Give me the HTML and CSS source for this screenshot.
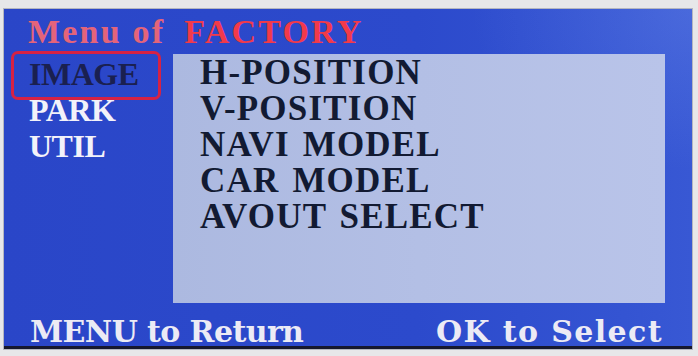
FILE: index.html
```html
<!DOCTYPE html>
<html lang="en">
<head>
<meta charset="utf-8">
<title>Menu of FACTORY</title>
<link rel="stylesheet" href="styles.css">
</head>
<body>
<div class="frame">
  <div class="screen">
    <div class="title"><span class="title-a">Menu of</span><span class="title-b">FACTORY</span></div>
    <div class="middle">
      <ul class="side">
        <li class="side-item selected">IMAGE</li>
        <li class="side-item">PARK</li>
        <li class="side-item">UTIL</li>
      </ul>
      <ul class="panel">
        <li>H-POSITION</li>
        <li>V-POSITION</li>
        <li>NAVI MODEL</li>
        <li>CAR MODEL</li>
        <li>AVOUT SELECT</li>
      </ul>
    </div>
    <div class="footer">
      <span class="foot-left">MENU to Return</span>
      <span class="foot-right">OK to Select</span>
    </div>
  </div>
</div>
</body>
</html>
```
FILE: styles.css
```css
html, body {
  margin: 0;
  padding: 0;
}
body {
  background: #e7e7e9;
  width: 698px;
  height: 356px;
  overflow: hidden;
}
.frame {
  padding: 9px 6px 0 4px;
}
.screen {
  width: 688px;
  height: 340px;
  box-sizing: border-box;
  border-bottom: 3px solid #16182e;
  box-shadow: 0 0 0 1px #b4b6c0;
  background:
    radial-gradient(ellipse 220px 160px at 100% 0%, rgba(120,150,240,0.28), rgba(120,150,240,0) 100%),
    linear-gradient(90deg, #2a46c8 0%, #2c4acc 60%, #3454d2 90%, #3858d4 100%);
  display: flex;
  flex-direction: column;
  padding-top: 3px;
}
.title {
  font-family: "Liberation Serif", "Times New Roman", serif;
  font-weight: bold;
  font-size: 34px;
  line-height: 40px;
  height: 40px;
  padding-left: 24px;
  white-space: nowrap;
}
.title-a { color: #e4647a; letter-spacing: 2.2px; }
.title-b { color: #f23a4a; letter-spacing: 2.2px; margin-left: 19px; }
.middle {
  display: flex;
  height: 265px;
  margin-top: 1px;
}
.side {
  list-style: none;
  margin: 0;
  padding: 3px 0 0 25px;
  width: 144px;
  font-family: "Liberation Serif", "Times New Roman", serif;
  font-weight: bold;
  font-size: 32px;
  line-height: 36px;
}
.side-item {
  color: #f2f2fa;
  position: relative;
  letter-spacing: -0.5px;
}
.side-item.selected {
  color: #1a2050;
}
.side-item.selected::before {
  content: "";
  position: absolute;
  left: -18px;
  top: -5px;
  width: 150px;
  height: 49px;
  box-sizing: border-box;
  border: 3px solid #d62244;
  border-radius: 7px;
}
.panel {
  list-style: none;
  margin: 1px 0 0 0;
  padding: 3px 0 0 27px;
  width: 492px;
  height: 249px;
  box-sizing: border-box;
  background: linear-gradient(90deg, #acb9e0 0%, #b3bfe5 50%, #b9c4e9 100%);
  font-family: "Liberation Serif", "Times New Roman", serif;
  font-weight: bold;
  font-size: 35px;
  color: #121a32;
  letter-spacing: 1.2px;
  word-spacing: 3px;
}
.panel li {
  height: 36px;
  line-height: 32px;
}
.footer {
  height: 28px;
  line-height: 28px;
  display: flex;
  justify-content: space-between;
  padding: 0 29px 0 26px;
  font-family: "DejaVu Serif", "Liberation Serif", serif;
  font-weight: bold;
  font-size: 30px;
  color: #ecebf5;
  white-space: nowrap;
  margin-top: auto;
}
.foot-left { letter-spacing: -0.6px; }
.foot-right { letter-spacing: 1.4px; }
```
